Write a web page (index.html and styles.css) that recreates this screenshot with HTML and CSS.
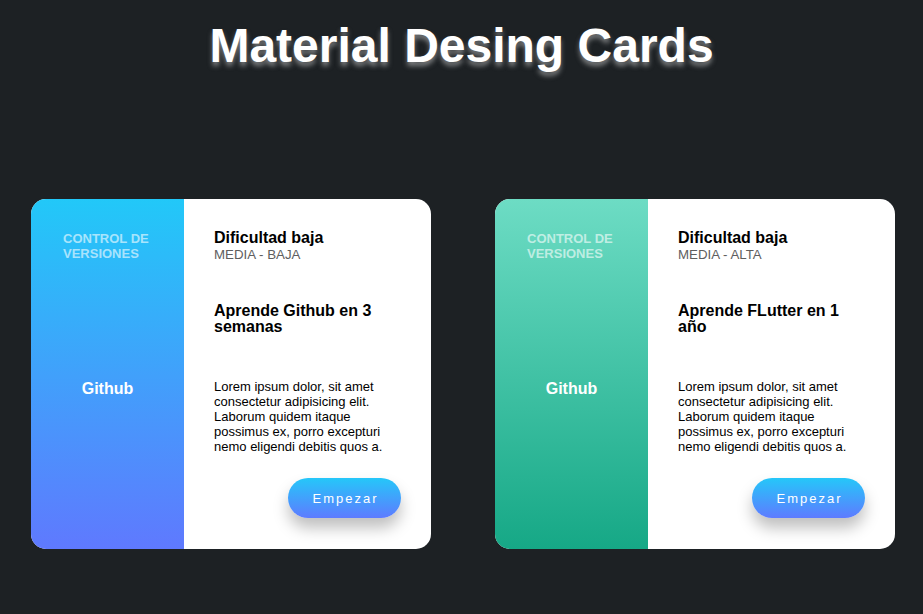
FILE: index.html
```html
<!DOCTYPE html>
<html lang="es">
<head>
<meta charset="utf-8">
<title>Material Desing Cards</title>
<link rel="stylesheet" href="styles.css">
</head>
<body>
<h1 class="title">Material Desing Cards</h1>
<div class="cards">
  <div class="card">
    <div class="side side-blue">
      <h6 class="side-label">CONTROL DE VERSIONES</h6>
      <h2 class="side-name">Github</h2>
    </div>
    <div class="main">
      <h3 class="level">Dificultad baja</h3>
      <h6 class="sublevel">MEDIA - BAJA</h6>
      <h2 class="course">Aprende Github en 3 semanas</h2>
      <p class="desc">Lorem ipsum dolor, sit amet consectetur adipisicing elit. Laborum quidem itaque possimus ex, porro excepturi nemo eligendi debitis quos a.</p>
      <button class="btn">Empezar</button>
    </div>
  </div>
  <div class="card">
    <div class="side side-green">
      <h6 class="side-label">CONTROL DE VERSIONES</h6>
      <h2 class="side-name">Github</h2>
    </div>
    <div class="main">
      <h3 class="level">Dificultad baja</h3>
      <h6 class="sublevel">MEDIA - ALTA</h6>
      <h2 class="course">Aprende FLutter en 1 año</h2>
      <p class="desc">Lorem ipsum dolor, sit amet consectetur adipisicing elit. Laborum quidem itaque possimus ex, porro excepturi nemo eligendi debitis quos a.</p>
      <button class="btn">Empezar</button>
    </div>
  </div>
</div>
</body>
</html>
```
FILE: styles.css
```css
* { box-sizing: border-box; }
body {
  margin: 0;
  background: #1d2124;
  font-family: "Liberation Sans", Arial, sans-serif;
  min-height: 614px;
}
.title {
  margin: 0;
  padding-top: 18px;
  text-align: center;
  font-size: 48px;
  font-weight: bold;
  line-height: 55px;
  color: #fff;
  text-shadow: 0 4px 5px rgba(220, 220, 220, 0.5);
}
.cards {
  display: flex;
  gap: 64px;
  margin-top: 126px;
  padding-left: 31px;
}
.card {
  width: 400px;
  height: 350px;
  border-radius: 15px;
  overflow: hidden;
  display: flex;
  background: #fff;
}
.side {
  width: 153px;
  flex: none;
  padding: 32px 32px 0;
  display: flex;
  flex-direction: column;
}
.side-blue { background: linear-gradient(to bottom, #22c8f8, #5f79fe); }
.side-green { background: linear-gradient(to bottom, #6ddcc4, #16a886); }
.side-label {
  margin: 0;
  font-size: 13px;
  line-height: 15px;
  font-weight: bold;
  color: rgba(255, 255, 255, 0.6);
}
.side-name {
  margin: 119px 0 0;
  font-size: 16px;
  line-height: 18px;
  font-weight: bold;
  text-align: center;
  color: #fff;
}
.main {
  flex: 1;
  padding: 31px 30px 0;
  display: flex;
  flex-direction: column;
  color: #000;
}
.level {
  margin: 0;
  font-size: 16px;
  line-height: 16px;
  font-weight: bold;
}
.sublevel {
  margin: 1px 0 0;
  font-size: 13.3px;
  line-height: 16px;
  font-weight: normal;
  color: #5e5e5e;
}
.course {
  margin: 40px 0 0;
  font-size: 16px;
  line-height: 16px;
  font-weight: bold;
}
.desc {
  margin: 44px 0 0;
  font-size: 13px;
  line-height: 15px;
}
.btn {
  align-self: flex-end;
  margin-top: 24px;
  width: 113px;
  height: 40px;
  border: none;
  border-radius: 20px;
  background: linear-gradient(to bottom, #25c7f9, #5e7bff);
  color: #fff;
  font-family: "Liberation Sans", Arial, sans-serif;
  font-size: 13px;
  letter-spacing: 2px;
  padding: 0 0 0 2px;
  box-shadow: 0 10px 15px rgba(0, 0, 0, 0.25);
}
```
